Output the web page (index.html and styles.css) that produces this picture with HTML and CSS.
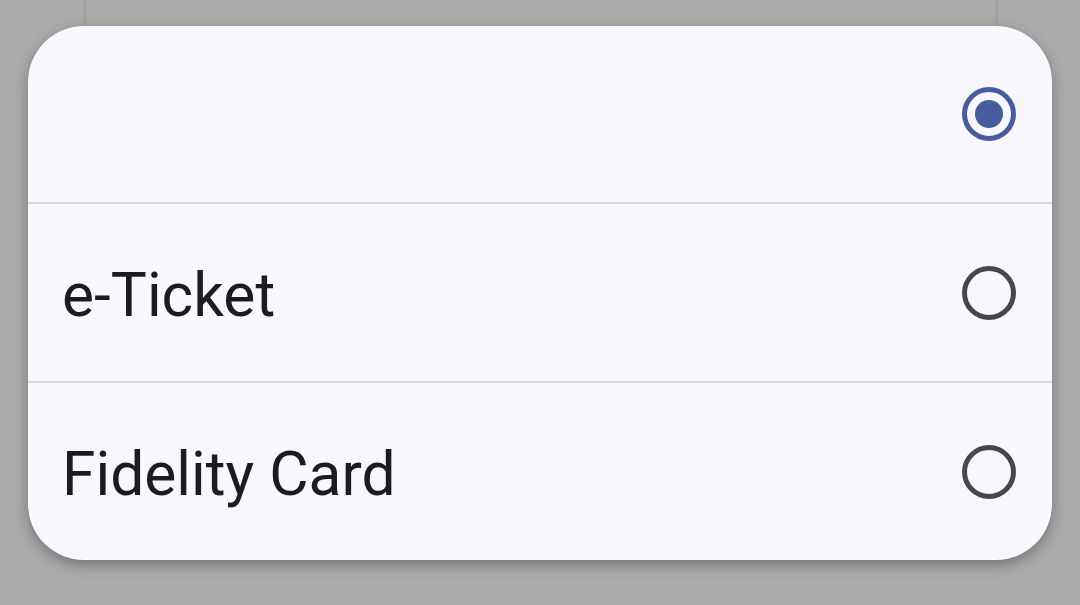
FILE: index.html
```html
<!DOCTYPE html>
<html lang="en">
<head>
    <meta charset="UTF-8">
    <meta name="viewport" content="width=device-width, initial-scale=1.0">
    <title>Ticket Type</title>
    <link rel="stylesheet" href="styles.css">
</head>
<body>
    <!-- page behind the dialog -->
    <div class="page"></div>

    <div class="dialog">
        <label class="option">
            <span class="option-label"></span>
            <span class="radio checked"></span>
        </label>
        <label class="option">
            <span class="option-label">e-Ticket</span>
            <span class="radio"></span>
        </label>
        <label class="option">
            <span class="option-label">Fidelity Card</span>
            <span class="radio"></span>
        </label>
    </div>
</body>
</html>
```

FILE: styles.css
```css
body {
    margin: 0;
    padding: 0;
    background: #ababab;
    font-family: Roboto, "Noto Sans", Arial, sans-serif;
    height: 605px;
    overflow: hidden;
}

.page {
    margin: 0 82px 0 83px;
    height: 300px;
    border-left: 3px solid #a3a3a3;
    border-right: 3px solid #a3a3a3;
}

/* dialog */
.dialog {
    position: absolute;
    top: 26px;
    left: 28px;
    width: 1024px;
    background: #f8f7fd;
    border-radius: 56px;
    box-shadow: 0 5px 14px rgba(0, 0, 0, 0.32);
    overflow: hidden;
}
.option {
    display: flex;
    align-items: center;
    justify-content: space-between;
    height: 176px;
    padding: 0 36px 0 34px;
}
.option + .option {
    border-top: 2px solid #dcdae1;
    height: 177px;
}
.option-label {
    font-size: 60.5px;
    color: #1b1b21;
    padding-top: 5px;
}
.radio {
    box-sizing: border-box;
    width: 54px;
    height: 54px;
    border-radius: 50%;
    border: 5px solid #47464f;
    display: flex;
    align-items: center;
    justify-content: center;
}
.radio.checked {
    border-color: #475c9c;
}
.radio.checked::after {
    content: "";
    width: 28px;
    height: 28px;
    border-radius: 50%;
    background: #475c9c;
}
```
